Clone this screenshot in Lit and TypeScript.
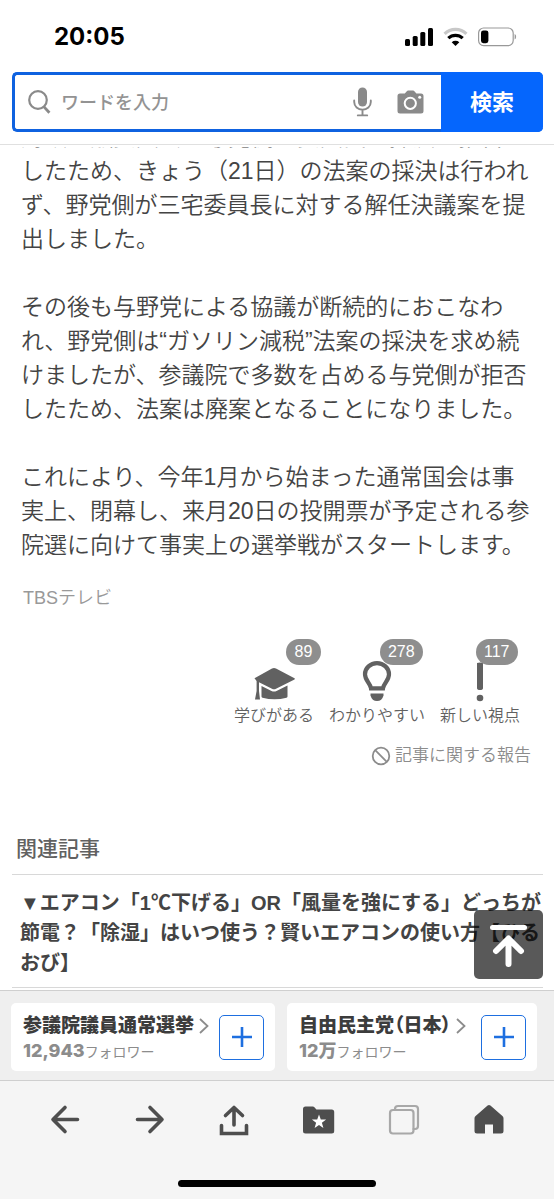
import { LitElement, html, css, svg } from "lit";
import { customElement, property } from "lit/decorators.js";

const FONT = css`"Liberation Sans", "Noto Sans CJK JP", sans-serif`;

@customElement("status-bar")
class StatusBar extends LitElement {
  static styles = css`
    :host {
      display: flex;
      align-items: center;
      justify-content: space-between;
      height: 72px;
      padding: 2px 37px 0 54px;
      box-sizing: border-box;
      color: #000;
    }
    time {
      font: 700 24px/28px Inter, sans-serif;
    }
    svg {
      display: block;
    }
  `;
  render() {
    return html`
      <time datetime="20:05">20:05</time>
      <svg width="112" height="20" viewBox="0 0 112 20" aria-hidden="true">
        <rect x="0" y="12" width="5" height="7" rx="1.5" />
        <rect x="7.7" y="9" width="5" height="10" rx="1.5" />
        <rect x="15.3" y="5" width="5" height="14" rx="1.5" />
        <rect x="23" y="1" width="5" height="18" rx="1.5" />
        <g fill="none" stroke="#000" stroke-width="3.2">
          <path d="M39.6 6.8a15.6 15.6 0 0 1 21.8 0" stroke="#c8c8c8" />
          <path d="M43.3 11.2a10.4 10.4 0 0 1 14.4 0" />
        </g>
        <path d="M46.7 15.2a5.6 5.6 0 0 1 7.6 0l-3.8 3.8z" />
        <rect x="73.6" y="1" width="34.6" height="17.6" rx="5" fill="none" stroke="#999" stroke-width="1.2" />
        <rect x="76" y="3.4" width="7.4" height="12.8" rx="2.4" />
        <path d="M109.6 7v5.4c2-.6 2-4.8 0-5.4z" fill="#999" />
      </svg>
    `;
  }
}

@customElement("search-bar")
class SearchBar extends LitElement {
  static styles = css`
    :host {
      display: block;
      padding: 0 11px 12px 12px;
      border-bottom: 1px solid #e0e0e0;
    }
    form {
      display: flex;
      height: 60px;
      box-sizing: border-box;
      border: 3px solid #0f62e0;
      border-right: 0;
      border-radius: 5px;
      background: #fff;
    }
    .field {
      flex: 1;
      min-width: 0;
      display: flex;
      align-items: center;
      padding-left: 13px;
    }
    input {
      flex: 1;
      min-width: 0;
      border: 0;
      outline: 0;
      padding: 2px 0 0;
      margin-left: 9px;
      background: none;
      font: 500 18px/28px ${FONT};
      color: #333;
    }
    input::placeholder {
      color: #939393;
      opacity: 1;
    }
    .tool {
      display: block;
      border: 0;
      padding: 0;
      background: none;
      margin-right: 17px;
    }
    .tool.mic {
      margin-right: 25px;
    }
    svg {
      display: block;
    }
    .submit {
      border: 0;
      margin: -3px 0;
      padding: 2px 0 0;
      width: 102px;
      border-radius: 0 5px 5px 0;
      background: #0566fd;
      color: #fff;
      font: 700 22px/30px ${FONT};
    }
  `;
  render() {
    return html`
      <form role="search" @submit=${(e: Event) => e.preventDefault()}>
        <div class="field">
          <svg width="24" height="26" viewBox="0 0 24 26" fill="none" stroke="#8a8a8a" aria-hidden="true">
            <circle cx="10" cy="11" r="8.8" stroke-width="2.2" />
            <path d="M15.8 17.6l5.6 6.2" stroke-width="2.8" />
          </svg>
          <input type="text" aria-label="検索ワード" placeholder="ワードを入力" />
          <button class="tool mic" type="button" aria-label="音声検索">
            <svg width="19" height="30" viewBox="0 0 19 30" fill="none" stroke="#8a8a8a" stroke-width="1.9">
              <rect x="5" y="0.5" width="9" height="19" rx="4.5" fill="#8a8a8a" stroke="none" />
              <path d="M1.2 13.5v1.6a8.3 7.6 0 0 0 16.6 0v-1.6M9.5 22.8v5M4.8 28.4h9.4" stroke-linecap="round" />
            </svg>
          </button>
          <button class="tool" type="button" aria-label="カメラ検索">
            <svg width="27" height="24" viewBox="0 0 27 24">
              <path
                fill="#8a8a8a"
                d="M3 3.6h4.8l2-2.4q.5-.6 1.3-.6h5q.8 0 1.3.6l2 2.4H24q2.5 0 2.5 2.5V21q0 2.5-2.5 2.5H3Q.5 23.5.5 21V6.1Q.5 3.6 3 3.6z"
              />
              <circle cx="13.3" cy="13.3" r="5.6" fill="none" stroke="#fff" stroke-width="2" />
              <circle cx="22.7" cy="7.3" r="1.5" fill="#fff" />
            </svg>
          </button>
        </div>
        <button class="submit" type="submit">検索</button>
      </form>
    `;
  }
}

const REACTIONS = [
  {
    label: "学びがある",
    count: 89,
    badge: "outer",
    icon: svg`<path d="M0.5 16.2L18 6.5q2-1 4 0l18.5 9.7q.8.6 0 1.2L22 26.8q-2 1-4 0L5 20.2V29l1 8.5H1L2.6 29V19z"/><path d="M7.5 24l10 5q2.5 1.2 5 0l11-5.6v11q0 1-1 1.4-12 3-24 0-1-.4-1-1.4z"/>`,
  },
  {
    label: "わかりやすい",
    count: 278,
    badge: "middle",
    icon: svg`<path fill="none" stroke="#616161" stroke-width="4.2" d="M14 26.3c-.6-5-6-7.5-6-14a12 11.2 0 0 1 24 0c0 6.5-5.4 9-6 14z"/><path d="M13.5 31.5h13v2q-1.5 5.5-6.5 5.5t-6.5-5.5z"/>`,
  },
  {
    label: "新しい視点",
    count: 117,
    badge: "inner",
    icon: svg`<path d="M17 1q3-1 6 0v25q0 2-3 2t-3-2z"/><circle cx="20" cy="36" r="3.3"/>`,
  },
];

@customElement("reaction-button")
class ReactionButton extends LitElement {
  @property({ attribute: false }) data: any;
  static styles = css`
    :host {
      display: block;
    }
    button {
      position: relative;
      display: flex;
      flex-direction: column;
      align-items: center;
      border: 0;
      padding: 23px 0 0;
      background: none;
      color: #616161;
      font: 350 16px/22px ${FONT};
      white-space: nowrap;
    }
    svg {
      display: block;
      overflow: visible;
      fill: #616161;
      margin-bottom: 3px;
    }
    .count {
      position: absolute;
      top: 0;
      left: 50%;
      min-width: 35px;
      box-sizing: border-box;
      padding: 0 8px;
      border-radius: 13px;
      background: #8e8e8e;
      color: #fff;
      line-height: 26px;
    }
    .outer {
      margin-left: 12px;
    }
    .middle {
      margin-left: 3px;
    }
    .inner {
      margin-left: -4px;
    }
  `;
  render() {
    const d = this.data;
    return html`<button type="button">
      <svg width="40" height="40" viewBox="0 0 40 40" aria-hidden="true">${d.icon}</svg>
      <span>${d.label}</span>
      <span class="count ${d.badge}">${d.count}</span>
    </button>`;
  }
}

@customElement("article-view")
class ArticleView extends LitElement {
  static styles = css`
    :host {
      display: block;
      flex: 1;
      min-height: 0;
      overflow: hidden;
      position: relative;
      border-top: 2px solid #fff;
      font-family: ${FONT};
      color: #444;
    }
    .story {
      margin: -27px 0 0;
      padding: 0 0 0 21px;
      font-size: 23px;
      line-height: 34px;
      white-space: nowrap;
      font-weight: 350;
    }
    p {
      margin: 0 0 34px;
    }
    .source {
      margin: -12px 0 0;
      padding-left: 23px;
      font-size: 18px;
      line-height: 28px;
      color: #999;
      font-weight: 350;
    }
    .reactions {
      display: flex;
      justify-content: flex-end;
      gap: 15px;
      padding: 27px 34px 0 0;
    }
    .report {
      display: flex;
      align-items: center;
      justify-content: flex-end;
      gap: 4px;
      margin-top: 15px;
      padding-right: 23px;
      font-size: 17px;
      line-height: 28px;
      font-weight: 350;
      color: #8c8c8c;
      text-decoration: none;
    }
    h2 {
      margin: 65px 11px 0 12px;
      padding: 0 4px 11px;
      border-bottom: 1px solid #d8d8d8;
      font-size: 21px;
      line-height: 28px;
      font-weight: 500;
      color: #616161;
    }
    .related {
      display: block;
      margin: 0 11px 0 12px;
      padding: 13px 0 9px 8px;
      border-bottom: 1px solid #d8d8d8;
      font-size: 20px;
      line-height: 30px;
      font-weight: 700;
      color: #444;
      text-decoration: none;
      white-space: nowrap;
    }
    .top {
      position: absolute;
      right: 11px;
      bottom: 11px;
      width: 69px;
      height: 69px;
      border: 0;
      padding: 0;
      border-radius: 5px;
      background: rgba(0, 0, 0, 0.65);
    }
    .top svg {
      display: block;
    }
  `;
  render() {
    return html`
      <div class="story">
        <p>
          財政金融委員会で与党側の委員長が採決を拒否<br />したため、きょう（21日）の法案の採決は行われ<br />ず、野党側が三宅委員長に対する解任決議案を提<br />出しました。
        </p>
        <p>
          その後も与野党による協議が断続的におこなわ<br />れ、野党側は“ガソリン減税”法案の採決を求め続<br />けましたが、参議院で多数を占める与党側が拒否<br />したため、法案は廃案となることになりました。
        </p>
        <p>
          これにより、今年1月から始まった通常国会は事<br />実上、閉幕し、来月20日の投開票が予定される参<br />院選に向けて事実上の選挙戦がスタートします。
        </p>
      </div>
      <p class="source">TBSテレビ</p>
      <div class="reactions">
        ${REACTIONS.map((r) => html`<reaction-button .data=${r}></reaction-button>`)}
      </div>
      <a class="report" href="#report">
        <svg width="20" height="20" viewBox="0 0 20 20" fill="none" stroke="#8c8c8c" stroke-width="1.8" aria-hidden="true">
          <circle cx="10" cy="10" r="8.3" />
          <path d="M4.2 4.2l11.6 11.6" />
        </svg>
        記事に関する報告
      </a>
      <h2>関連記事</h2>
      <a class="related" href="#related">
        ▼エアコン「1℃下げる」OR「風量を強にする」どっちが<br />節電？「除湿」はいつ使う？賢いエアコンの使い方【ひる<br />おび】
      </a>
      <button class="top" type="button" aria-label="ページの先頭へ">
        <svg width="69" height="69" viewBox="0 0 69 69" fill="none" stroke="#fff" stroke-linecap="round" stroke-linejoin="round">
          <path d="M18.5 17.5h32" stroke-width="5" />
          <path d="M34.5 29v25M22 41l12.5-12.5L47 41" stroke-width="6" />
        </svg>
      </button>
    `;
  }
}

@customElement("follow-card")
class FollowCard extends LitElement {
  @property() name = "";
  @property() count = "";
  static styles = css`
    :host {
      display: flex;
      align-items: center;
      gap: 10px;
      height: 68px;
      box-sizing: border-box;
      padding: 0 11px 0 12px;
      border-radius: 5px;
      background: #fff;
      font-family: ${FONT};
      white-space: nowrap;
    }
    a {
      color: #3c3c3c;
      text-decoration: none;
      padding-top: 2px;
    }
    .name {
      display: flex;
      align-items: center;
      gap: 5px;
      font-size: 19px;
      line-height: 26px;
      font-weight: 900;
      font-feature-settings: "palt";
    }
    .followers {
      display: block;
      font-size: 14px;
      line-height: 24px;
      color: #8c8c8c;
    }
    b {
      font: 800 18px/24px Inter, "Noto Sans CJK JP", sans-serif;
    }
    button {
      width: 45px;
      height: 45px;
      border: 1px solid #1e6fe0;
      border-radius: 5px;
      padding: 0;
      background: #fff;
    }
    svg {
      display: block;
      margin: auto;
    }
    .name svg {
      margin: 0;
    }
  `;
  render() {
    return html`
      <a href="#theme">
        <span class="name">${this.name}
          <svg width="10" height="16" viewBox="0 0 10 16" fill="none" stroke="#8c8c8c" stroke-width="1.8" aria-hidden="true"><path d="M1 1l7.5 7L1 15" /></svg>
        </span>
        <span class="followers"><b>${this.count}</b>フォロワー</span>
      </a>
      <button type="button" aria-label="${this.name}をフォロー">
        <svg width="20" height="20" viewBox="0 0 20 20" stroke="#1e6fe0" stroke-width="2.6"><path d="M10 0v20M0 10h20" /></svg>
      </button>
    `;
  }
}

@customElement("tool-bar")
class ToolBar extends LitElement {
  static styles = css`
    :host {
      display: flex;
      flex-direction: column;
      align-items: center;
      border-top: 1px solid #cfcfcf;
      background: #f5f5f5;
    }
    nav {
      display: grid;
      grid-template-columns: repeat(6, 1fr);
      align-self: stretch;
      padding: 22px 23px 0;
    }
    button {
      border: 0;
      padding: 0;
      background: none;
      display: flex;
      justify-content: center;
      color: #4e4e4e;
    }
    svg {
      display: block;
    }
    .home {
      width: 198px;
      height: 7px;
      margin: 43px 0 12px;
      border-radius: 4px;
      background: #000;
    }
  `;
  render() {
    const line = (label: string, icon: unknown) => html`<button type="button" aria-label=${label}>
      <svg width="34" height="34" viewBox="0 0 34 34" fill="none" stroke="currentColor" stroke-width="3.6" stroke-linecap="round" stroke-linejoin="round">${icon}</svg>
    </button>`;
    return html`
      <nav>
        ${line("戻る", svg`<path d="M29.5 16.5H5M17 4.5l-12 12 12 12"/>`)}
        ${line("進む", svg`<path d="M4.5 16.5H29M17 4.5l12 12-12 12"/>`)}
        ${line("共有", svg`<path d="M16 22V5M7.5 12.5L16 4.5l8.500 8"/><path d="M3.5 22.5v8h25v-8" stroke-linejoin="miter"/>`)}
        ${line("ブックマーク", svg`<path fill="currentColor" stroke="none" d="M3.5 3.5h7.3q1 0 1.6.7l2 2.3h15.3q2.5 0 2.5 2.5v19q0 2.5-2.5 2.5H3.5Q1 30.5 1 28V6q0-2.5 2.5-2.5z"/><path fill="#fff" stroke="none" d="M17 11.5l1.8 5h5.3l-4.2 3.3 1.5 5.2-4.4-3-4.4 3 1.5-5.2-4.2-3.3h5.3z"/>`)}
        ${line("タブ", svg`<g stroke="#a8a8a8" stroke-width="2.2"><rect x="3" y="7" width="23.5" height="23.5" rx="3"/><path d="M8 7V6q0-3 3-3h17q3 0 3 3v17q0 3-3 3h-1.5"/></g>`)}
        ${line("ホーム", svg`<path fill="currentColor" stroke="none" d="M15.6 2.5q1.4-1.2 2.8 0l12 10.5q1.1 1 1.1 2.3V28q0 2.5-2.5 2.5h-8v-9h-8v9H5q-2.5 0-2.5-2.5V15.3q0-1.3 1.1-2.3z"/>`)}
      </nav>
      <div class="home"></div>
    `;
  }
}

@customElement("app-root")
class AppRoot extends LitElement {
  static styles = css`
    :host {
      display: flex;
      flex-direction: column;
      height: 100vh;
      background: #fff;
      font-family: ${FONT};
    }
    .follow {
      display: flex;
      gap: 12px;
      padding: 12px 17px 9px 11px;
      border-top: 1px solid #cfcfcf;
      background: #efefef;
    }
    .follow > :last-child {
      flex: 1;
    }
    .follow > * {
      justify-content: space-between;
    }
  `;
  render() {
    return html`
      <status-bar></status-bar>
      <search-bar></search-bar>
      <article-view></article-view>
      <section class="follow" aria-label="関連テーマ">
        <follow-card name="参議院議員通常選挙" count="12,943"></follow-card>
        <follow-card name="自由民主党（日本）" count="12万"></follow-card>
      </section>
      <tool-bar></tool-bar>
    `;
  }
}
